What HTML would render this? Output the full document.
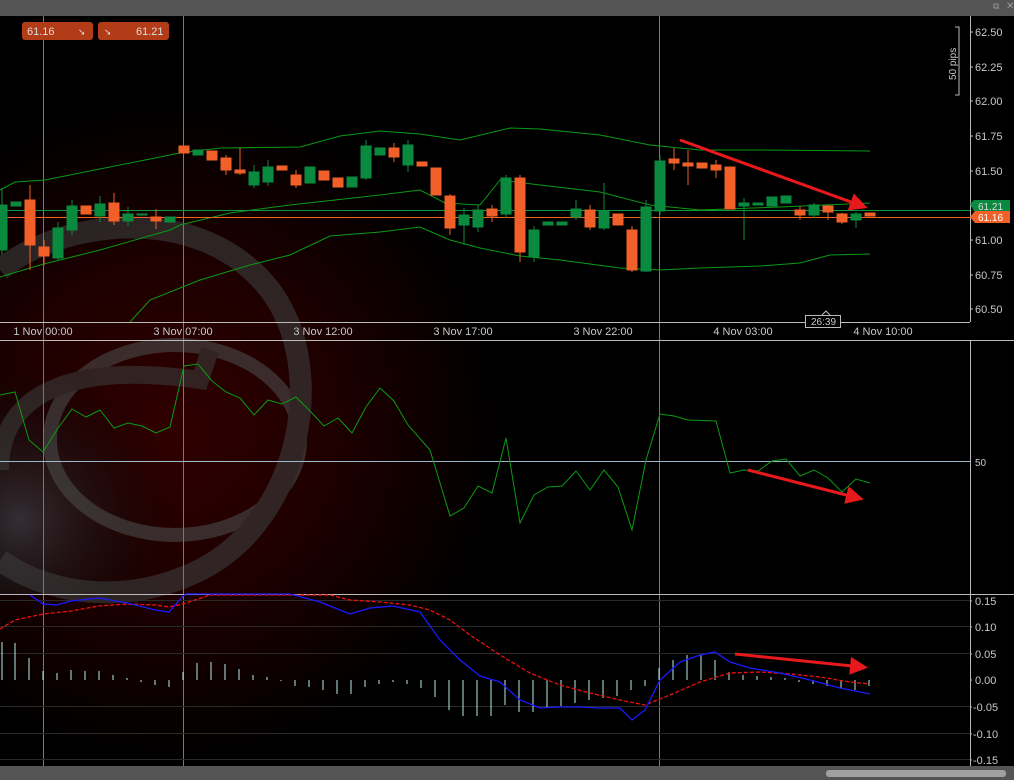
<!DOCTYPE html><html><head><style>
html,body{margin:0;padding:0;background:#000;width:1014px;height:780px;overflow:hidden;font-family:"Liberation Sans",sans-serif}
svg{display:block}
text{font-family:"Liberation Sans",sans-serif;font-size:11px;fill:#c8c8c8}
</style></head><body>
<svg width="1014" height="780" viewBox="0 0 1014 780">
<defs>
<radialGradient id="bg" cx="170" cy="430" r="330" gradientUnits="userSpaceOnUse">
<stop offset="0" stop-color="#300000"/><stop offset="0.5" stop-color="#1e0000"/><stop offset="1" stop-color="#000"/>
</radialGradient>
<radialGradient id="gl" cx="20" cy="520" r="160" gradientUnits="userSpaceOnUse">
<stop offset="0" stop-color="#3a3a40" stop-opacity="0.8"/><stop offset="1" stop-color="#000" stop-opacity="0"/>
</radialGradient>
<marker id="ah" markerWidth="6" markerHeight="6" refX="4" refY="3" orient="auto" markerUnits="strokeWidth"><path d="M0,0 L6,3 L0,6 z" fill="#e8191c"/></marker>
</defs>
<rect width="1014" height="780" fill="#000"/>
<rect x="0" y="16" width="970" height="750" fill="url(#bg)"/>
<rect x="0" y="340" width="250" height="254" fill="url(#gl)"/>
<!-- logo ring -->
<g fill="none" opacity="0.6">
<ellipse cx="175" cy="440" rx="125" ry="95" stroke="#4a4a4a" stroke-width="14"/>
<path d="M0,270 C60,220 200,200 270,290 C330,370 300,520 200,570 C120,610 40,590 0,560" stroke="#3c3c3c" stroke-width="22"/>
<path d="M0,470 C0,400 60,360 200,380 L210,350" stroke="#3a3a3a" stroke-width="18"/>
</g>
<!-- top bar -->
<rect x="0" y="0" width="1014" height="16" fill="#545454"/>
<text x="993" y="9" style="font-size:9px;fill:#999">⧉</text>
<text x="1006" y="9" style="font-size:10px;fill:#999">✕</text>
<!-- vertical grid -->
<g stroke="#777" stroke-width="1"><line x1="43.5" y1="16" x2="43.5" y2="766"/><line x1="183.5" y1="16" x2="183.5" y2="766"/><line x1="659.5" y1="16" x2="659.5" y2="766"/></g>
<!-- price labels -->
<rect x="22" y="22" width="71" height="18" rx="3" fill="#b23c17"/><text x="27" y="35" style="fill:#ddd">61.16</text><text x="78" y="35" style="fill:#ddd;font-size:9px">➘</text>
<rect x="98" y="22" width="71" height="18" rx="3" fill="#b23c17"/><text x="104" y="35" style="fill:#ddd;font-size:9px">➘</text><text x="136" y="35" style="fill:#ddd">61.21</text>
<!-- bollinger -->
<g fill="none" stroke="#0a9a14" stroke-width="1">
<polyline points="0,190 15,182 45,180 180,153 220,148 300,147 340,136 380,131 420,134 460,140 510,128 540,129 600,135 650,145 700,150 760,150 870,151"/>
<polyline points="0,277 40,265 100,250 170,230 180,225 230,213 290,205 380,195 420,190 445,203 480,205 500,180 540,185 600,192 650,205 700,210 780,207 870,203"/>
<polyline points="130,322 150,300 200,280 250,265 290,255 330,236 380,232 420,227 450,240 480,248 520,256 560,260 620,268 660,270 700,268 760,266 800,263 830,255 870,254"/>
</g>
<line x1="0" y1="210.5" x2="970" y2="210.5" stroke="#0a9a3a"/>
<line x1="0" y1="217.5" x2="970" y2="217.5" stroke="#f06020"/>
<!-- candles -->
<g stroke-width="1">
<g stroke="#0a8a3e" fill="#0a8a3e">
<line x1="2" y1="188" x2="2" y2="255"/><rect x="-3" y="205" width="10" height="45"/>
<rect x="11" y="202" width="10" height="4"/>
<line x1="58" y1="222" x2="58" y2="260"/><rect x="53" y="228" width="10" height="30"/>
<line x1="72" y1="200" x2="72" y2="235"/><rect x="67" y="206" width="10" height="24"/>
<line x1="100" y1="196" x2="100" y2="222"/><rect x="95" y="204" width="10" height="12"/>
<line x1="128" y1="207" x2="128" y2="226"/><rect x="123" y="214" width="10" height="7"/>
<rect x="137" y="214" width="10" height="1"/>
<rect x="165" y="217" width="10" height="5"/>
<rect x="193" y="150" width="10" height="5"/>
<line x1="254" y1="165" x2="254" y2="188"/><rect x="249" y="172" width="10" height="13"/>
<line x1="268" y1="160" x2="268" y2="186"/><rect x="263" y="167" width="10" height="15"/>
<rect x="305" y="167" width="10" height="16"/>
<rect x="347" y="177" width="10" height="10"/>
<line x1="366" y1="140" x2="366" y2="180"/><rect x="361" y="146" width="10" height="32"/>
<rect x="375" y="148" width="10" height="7"/>
<line x1="408" y1="140" x2="408" y2="172"/><rect x="403" y="145" width="10" height="20"/>
<line x1="464" y1="208" x2="464" y2="245"/><rect x="459" y="215" width="10" height="10"/>
<line x1="478" y1="205" x2="478" y2="232"/><rect x="473" y="210" width="10" height="17"/>
<line x1="506" y1="175" x2="506" y2="218"/><rect x="501" y="178" width="10" height="36"/>
<line x1="534" y1="226" x2="534" y2="262"/><rect x="529" y="230" width="10" height="27"/>
<rect x="543" y="222" width="10" height="3"/>
<rect x="557" y="222" width="10" height="3"/>
<line x1="576" y1="200" x2="576" y2="220"/><rect x="571" y="209" width="10" height="8"/>
<line x1="604" y1="183" x2="604" y2="230"/><rect x="599" y="211" width="10" height="17"/>
<line x1="646" y1="200" x2="646" y2="272"/><rect x="641" y="207" width="10" height="64"/>
<line x1="660" y1="155" x2="660" y2="215"/><rect x="655" y="161" width="10" height="50"/>
<line x1="744" y1="198" x2="744" y2="240"/><rect x="739" y="203" width="10" height="3"/>
<rect x="753" y="203" width="10" height="2"/>
<rect x="767" y="197" width="10" height="9"/>
<rect x="781" y="196" width="10" height="7"/>
<line x1="814" y1="203" x2="814" y2="218"/><rect x="809" y="205" width="10" height="10"/>
<line x1="856" y1="212" x2="856" y2="228"/><rect x="851" y="214" width="10" height="6"/>
</g>
<g stroke="#f06028" fill="#f06028">
<line x1="30" y1="185" x2="30" y2="270"/><rect x="25" y="200" width="10" height="45"/>
<line x1="44" y1="240" x2="44" y2="265"/><rect x="39" y="247" width="10" height="9"/>
<rect x="81" y="206" width="10" height="8"/>
<line x1="114" y1="193" x2="114" y2="225"/><rect x="109" y="203" width="10" height="18"/>
<line x1="156" y1="209" x2="156" y2="229"/><rect x="151" y="217" width="10" height="4"/>
<rect x="179" y="146" width="10" height="7"/>
<rect x="207" y="151" width="10" height="9"/>
<line x1="226" y1="155" x2="226" y2="175"/><rect x="221" y="158" width="10" height="12"/>
<line x1="240" y1="148" x2="240" y2="175"/><rect x="235" y="170" width="10" height="3"/>
<rect x="277" y="166" width="10" height="4"/>
<line x1="296" y1="170" x2="296" y2="188"/><rect x="291" y="175" width="10" height="10"/>
<rect x="319" y="171" width="10" height="9"/>
<rect x="333" y="178" width="10" height="9"/>
<line x1="394" y1="143" x2="394" y2="162"/><rect x="389" y="148" width="10" height="9"/>
<rect x="417" y="162" width="10" height="4"/>
<rect x="431" y="168" width="10" height="27"/>
<line x1="450" y1="194" x2="450" y2="235"/><rect x="445" y="196" width="10" height="32"/>
<line x1="492" y1="205" x2="492" y2="222"/><rect x="487" y="209" width="10" height="7"/>
<line x1="520" y1="175" x2="520" y2="262"/><rect x="515" y="178" width="10" height="74"/>
<line x1="590" y1="205" x2="590" y2="230"/><rect x="585" y="210" width="10" height="17"/>
<rect x="613" y="214" width="10" height="11"/>
<line x1="632" y1="226" x2="632" y2="272"/><rect x="627" y="230" width="10" height="40"/>
<line x1="674" y1="148" x2="674" y2="170"/><rect x="669" y="159" width="10" height="4"/>
<line x1="688" y1="150" x2="688" y2="185"/><rect x="683" y="163" width="10" height="3"/>
<rect x="697" y="163" width="10" height="5"/>
<line x1="716" y1="160" x2="716" y2="178"/><rect x="711" y="165" width="10" height="5"/>
<rect x="725" y="167" width="10" height="42"/>
<line x1="800" y1="206" x2="800" y2="220"/><rect x="795" y="210" width="10" height="5"/>
<line x1="828" y1="205" x2="828" y2="220"/><rect x="823" y="206" width="10" height="6"/>
<line x1="842" y1="213" x2="842" y2="224"/><rect x="837" y="214" width="10" height="8"/>
<rect x="865" y="213" width="10" height="3"/>
</g>
</g>
<line x1="680" y1="140" x2="862" y2="206" stroke="#e8191c" stroke-width="3" marker-end="url(#ah)"/>
<!-- main axis -->
<line x1="970.5" y1="16" x2="970.5" y2="322" stroke="#bbb"/>
<line x1="0" y1="322.5" x2="970" y2="322.5" stroke="#bbb"/>
<line x1="0" y1="340.5" x2="1014" y2="340.5" stroke="#bbb"/>
<g stroke="#bbb"><path d="M970,32h3M970,67h3M970,101h3M970,136h3M970,171h3M970,206h3M970,240h3M970,275h3M970,309h3"/></g>
<path d="M955,27h4v68h-4" fill="none" stroke="#bbb"/>
<text transform="translate(956,80) rotate(-90)" style="font-size:10px">50 pips</text>
<g style="font-size:10px"><text x="975" y="36">62.50</text><text x="975" y="71">62.25</text><text x="975" y="105">62.00</text><text x="975" y="140">61.75</text><text x="975" y="175">61.50</text><text x="975" y="244">61.00</text><text x="975" y="279">60.75</text><text x="975" y="313">60.50</text></g>
<path d="M970,204 l4,-4 h36 v11 h-36 z" fill="#0a8a3e"/><text x="978" y="210" style="font-size:10px;fill:#ddd">61.21</text>
<path d="M970,217 l5,-6 h35 v12 h-35 z" fill="#f06028"/><text x="978" y="221" style="font-size:10px;fill:#fff">61.16</text>
<g style="font-size:10px" text-anchor="middle"><text x="43" y="335">1 Nov 00:00</text><text x="183" y="335">3 Nov 07:00</text><text x="323" y="335">3 Nov 12:00</text><text x="463" y="335">3 Nov 17:00</text><text x="603" y="335">3 Nov 22:00</text><text x="743" y="335">4 Nov 03:00</text><text x="883" y="335">4 Nov 10:00</text></g>
<rect x="805.5" y="315.5" width="35" height="12" fill="#000" stroke="#bbb"/><path d="M822,315 l4,-4 l4,4" fill="none" stroke="#bbb"/><text x="811" y="325" style="font-size:10px">26:39</text>
<!-- RSI -->
<line x1="0" y1="461.5" x2="970" y2="461.5" stroke="#9ab8c8"/>
<line x1="970.5" y1="340" x2="970.5" y2="766" stroke="#bbb"/>
<text x="975" y="466" style="font-size:10px">50</text>
<polyline fill="none" stroke="#0a9a14" stroke-width="1" points="0,395 15,392 29,440 43,452 58,428 72,409 86,417 100,410 114,428 128,423 142,426 156,433 170,427 184,366 198,364 212,381 226,392 240,398 254,415 268,400 282,404 296,397 310,411 324,426 338,418 352,433 366,407 380,388 394,401 408,425 430,450 450,516 464,508 478,486 492,493 506,438 520,523 534,495 548,487 562,486 576,471 590,490 604,470 618,487 632,530 646,460 660,414 674,416 688,420 716,421 730,473 744,470 758,471 772,461 786,459 800,476 814,470 828,478 842,492 856,479 870,483"/>
<line x1="748" y1="470" x2="858" y2="498" stroke="#e8191c" stroke-width="3" marker-end="url(#ah)"/>
<!-- MACD -->
<line x1="0" y1="594.5" x2="1014" y2="594.5" stroke="#bbb"/>
<g stroke="#2a2a2a"><line x1="0" y1="600.5" x2="970" y2="600.5"/><line x1="0" y1="626.5" x2="970" y2="626.5"/><line x1="0" y1="653.5" x2="970" y2="653.5"/><line x1="0" y1="706.5" x2="970" y2="706.5"/><line x1="0" y1="733.5" x2="970" y2="733.5"/><line x1="0" y1="759.5" x2="970" y2="759.5"/></g>
<g stroke="#b8ece8" stroke-width="1">
<path d="M2,642V680M15,643V680M29,658V680M43,671V680M57,673V680M71,670V680M85,671V680M99,671V680M113,675V680M127,678V680M141,680V682M155,680V685M169,680V687M183,672V680M197,663V680M211,662V680M225,664V680M239,669V680M253,675V680M267,677V680M281,680V681M295,680V686M309,680V687M323,680V690M337,680V694M351,680V694M365,680V687M379,680V684M393,680V682M407,680V684M421,680V688M435,680V697M449,680V710M463,680V716M477,680V716M491,680V716M505,680V705M519,680V712M533,680V712M547,680V707M561,680V706M575,680V703M589,680V700M603,680V698M617,680V696M631,680V690M645,680V686M659,668V680M673,660V680M687,655V680M701,655V680M715,660V680M729,672V680M743,675V680M757,676V680M771,677V680M785,678V680M799,680V682M813,680V684M827,680V686M841,680V688M855,680V690M869,680V686"/>
</g>
<polyline fill="none" stroke="#ee1010" stroke-width="1.3" stroke-dasharray="4 2" points="0,629 15,620 43,614 71,611 99,606 127,604 155,605 169,607 183,604 210,595 330,595 350,600 380,602 410,605 430,610 450,620 470,635 500,655 530,673 560,685 590,693 620,700 645,705 670,695 700,682 730,673 760,672 790,674 820,677 850,682 870,684"/>
<polyline fill="none" stroke="#1a1aff" stroke-width="1.3" points="30,595 43,604 57,605 71,601 99,598 127,603 155,610 169,612 183,596 186,594 290,594 320,602 350,614 370,608 393,606 420,612 440,640 460,660 480,676 500,682 520,700 540,708 560,707 580,707 600,708 620,708 632,720 645,710 660,680 680,662 700,655 715,652 730,662 750,668 780,673 810,680 840,688 870,694"/>
<line x1="735" y1="654" x2="862" y2="667" stroke="#e8191c" stroke-width="3" marker-end="url(#ah)"/>
<g style="font-size:10px"><text x="975" y="605">0.15</text><text x="975" y="631">0.10</text><text x="975" y="658">0.05</text><text x="975" y="684">0.00</text><text x="973" y="711">-0.05</text><text x="973" y="738">-0.10</text><text x="973" y="764">-0.15</text></g>
<g stroke="#bbb"><path d="M970,601h2M970,627h2M970,654h2M970,680h2M970,707h2M970,734h2M970,760h2"/></g>
<rect x="0" y="766" width="1014" height="14" fill="#545454"/>
<rect x="826" y="770" width="180" height="7" rx="3" fill="#a0a0a0"/>
</svg>
</body></html>
